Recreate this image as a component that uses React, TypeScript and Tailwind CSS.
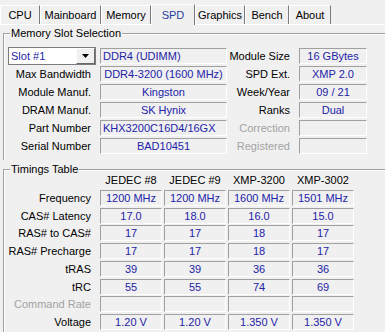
import React from 'react';

const VAL = 'text-[#2323a8]';

const Field: React.FC<{ w: string; left?: boolean; children?: React.ReactNode }> = ({ w, left, children }) => (
    <div
        className={`${w} h-[16px] shrink-0 border border-t-[#a0a0a0] border-l-[#a0a0a0] border-r-white border-b-white flex items-center ${VAL} whitespace-nowrap overflow-hidden ${left ? 'justify-start pl-[2px]' : 'justify-center'}`}
    >
        {children}
    </div>
);

const Label: React.FC<{ w: string; dim?: boolean; children: React.ReactNode }> = ({ w, dim, children }) => (
    <div className={`${w} shrink-0 text-right whitespace-nowrap ${dim ? 'text-[#a3a3a3]' : 'text-black'}`}>{children}</div>
);

const tabs = [
    { name: 'CPU', w: 'w-[40px]' },
    { name: 'Mainboard', w: 'w-[61px]' },
    { name: 'Memory', w: 'w-[50px]' },
    { name: 'SPD', w: 'w-[44px]', active: true },
    { name: 'Graphics', w: 'w-[50px]' },
    { name: 'Bench', w: 'w-[44px]' },
    { name: 'About', w: 'w-[42px]' },
];

const GroupBox: React.FC<{ title: string; h: string; children: React.ReactNode }> = ({ title, h, children }) => (
    <div className={`relative ${h} w-[400px] border-t border-l border-[#a0a0a0] shadow-[inset_1px_1px_0_#ffffff]`}>
        <div className="absolute left-[6px] -top-[8px] px-[1px] bg-[#f0f0f0] leading-[14px]">{title}</div>
        {children}
    </div>
);

const slotRows = [
    { l: 'Max Bandwidth', v: 'DDR4-3200 (1600 MHz)', rl: 'SPD Ext.', rv: 'XMP 2.0' },
    { l: 'Module Manuf.', v: 'Kingston', rl: 'Week/Year', rv: '09 / 21' },
    { l: 'DRAM Manuf.', v: 'SK Hynix', rl: 'Ranks', rv: 'Dual' },
    { l: 'Part Number', v: 'KHX3200C16D4/16GX', left: true, rl: 'Correction', rv: '', dim: true },
    { l: 'Serial Number', v: 'BAD10451', rl: 'Registered', rv: '', dim: true },
];

const timingCols = ['JEDEC #8', 'JEDEC #9', 'XMP-3200', 'XMP-3002'];
const timingRows: { l: string; v: string[]; dim?: boolean }[] = [
    { l: 'Frequency', v: ['1200 MHz', '1200 MHz', '1600 MHz', '1501 MHz'] },
    { l: 'CAS# Latency', v: ['17.0', '18.0', '16.0', '15.0'] },
    { l: 'RAS# to CAS#', v: ['17', '17', '18', '17'] },
    { l: 'RAS# Precharge', v: ['17', '17', '18', '17'] },
    { l: 'tRAS', v: ['39', '39', '36', '36'] },
    { l: 'tRC', v: ['55', '55', '74', '69'] },
    { l: 'Command Rate', v: ['', '', '', ''], dim: true },
    { l: 'Voltage', v: ['1.20 V', '1.20 V', '1.350 V', '1.350 V'] },
];

export default function App() {
    return (
        <div className="w-[385px] h-[332px] overflow-hidden bg-[#f0f0f0] text-[11px] leading-[14px] text-black font-['Liberation_Sans',Arial,sans-serif]">
            {/* tab strip */}
            <div className="h-[25px] flex items-end border-b border-white">
                {tabs.map((t) =>
                    t.active ? (
                        <div
                            key={t.name}
                            className={`${t.w} h-[21px] -mb-px flex items-center justify-center bg-[#f0f0f0] border-t border-l border-white border-r border-r-[#7a7a7a] text-[#1f3f9f]`}
                        >
                            {t.name}
                        </div>
                    ) : (
                        <div
                            key={t.name}
                            className={`${t.w} h-[19px] flex items-center justify-center border-t border-l border-white border-r border-r-[#7a7a7a]`}
                        >
                            {t.name}
                        </div>
                    )
                )}
            </div>

            <div className="pl-[3px] pt-[8px]">
                <GroupBox title="Memory Slot Selection" h="h-[127px]">
                    <div className="pt-[14px] flex flex-col gap-[2px]">
                        <div className="h-[16px] flex items-center">
                            <div className="ml-[4px] w-[88px] h-[18px] shrink-0 bg-white border border-[#7a7a7a] flex items-center justify-between">
                                <span className={`pl-[2px] ${VAL}`}>Slot #1</span>
                                <div className="w-[19px] h-[16px] bg-[#f0f0f0] border border-t-white border-l-white border-r-[#696969] border-b-[#696969] flex items-center justify-center">
                                    <svg width="7" height="4" viewBox="0 0 7 4">
                                        <path d="M0 0h7L3.5 4z" fill="#000" />
                                    </svg>
                                </div>
                            </div>
                            <div className="w-[4px] shrink-0" />
                            <Field w="w-[127px]" left>
                                DDR4 (UDIMM)
                            </Field>
                            <Label w="w-[63px]">Module Size</Label>
                            <div className="w-[9px] shrink-0" />
                            <Field w="w-[68px]">16 GBytes</Field>
                        </div>
                        {slotRows.map((r) => (
                            <div key={r.l} className="h-[16px] flex items-center">
                                <Label w="w-[87px]">{r.l}</Label>
                                <div className="w-[9px] shrink-0" />
                                <Field w="w-[127px]" left={r.left}>
                                    {r.v}
                                </Field>
                                <Label w="w-[63px]" dim={r.dim}>
                                    {r.rl}
                                </Label>
                                <div className="w-[9px] shrink-0" />
                                <Field w="w-[68px]">{r.rv}</Field>
                            </div>
                        ))}
                    </div>
                </GroupBox>

                <div className="h-[9px]" />

                <GroupBox title="Timings Table" h="h-[170px]">
                    <div className="pt-[2px] flex flex-col gap-[1.75px]">
                        <div className="h-[16px] flex items-center">
                            <div className="w-[96px] shrink-0" />
                            <div className="flex gap-[2px]">
                                {timingCols.map((c) => (
                                    <div key={c} className="w-[62px] text-center">
                                        {c}
                                    </div>
                                ))}
                            </div>
                        </div>
                        {timingRows.map((r) => (
                            <div key={r.l} className="h-[16px] flex items-center">
                                <Label w="w-[87px]" dim={r.dim}>
                                    {r.l}
                                </Label>
                                <div className="w-[9px] shrink-0" />
                                <div className="flex gap-[2px]">
                                    {r.v.map((v, i) => (
                                        <Field key={i} w="w-[62px]">
                                            {v}
                                        </Field>
                                    ))}
                                </div>
                            </div>
                        ))}
                    </div>
                </GroupBox>
            </div>
        </div>
    );
}
